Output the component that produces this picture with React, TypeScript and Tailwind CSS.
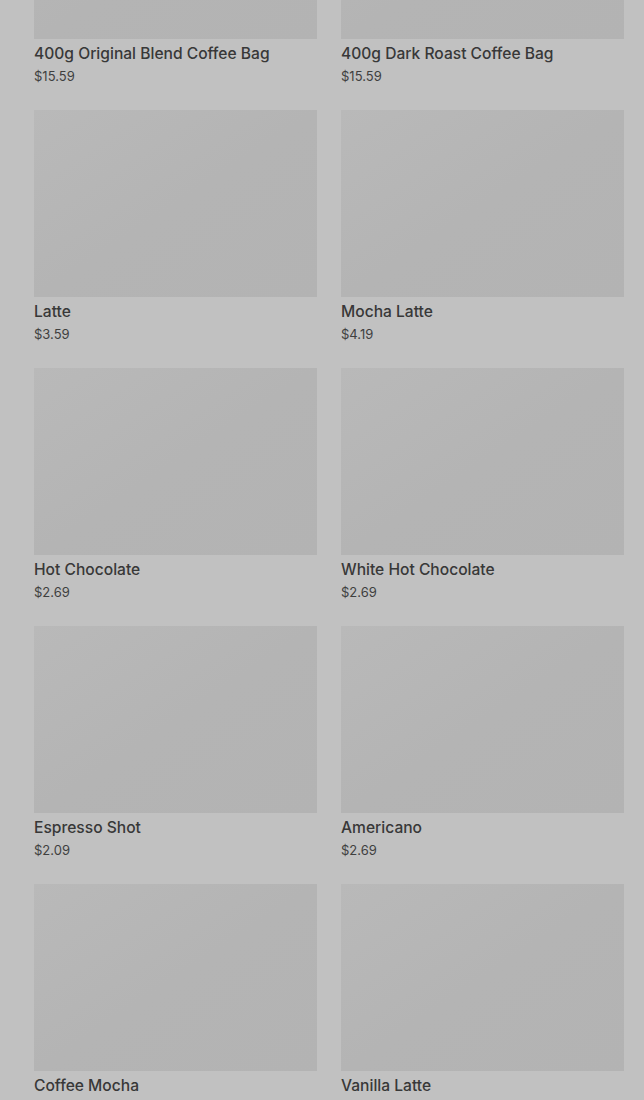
const products = [
  { name: "400g Original Blend Coffee Bag", price: "$15.59" },
  { name: "400g Dark Roast Coffee Bag", price: "$15.59" },
  { name: "Latte", price: "$3.59" },
  { name: "Mocha Latte", price: "$4.19" },
  { name: "Hot Chocolate", price: "$2.69" },
  { name: "White Hot Chocolate", price: "$2.69" },
  { name: "Espresso Shot", price: "$2.09" },
  { name: "Americano", price: "$2.69" },
  { name: "Coffee Mocha", price: "$2.69" },
  { name: "Vanilla Latte", price: "$3.79" },
];

const App = () => {
  return (
    <div className="h-[1100px] overflow-hidden bg-[#c1c1c1] font-['Inter','Noto_Sans',sans-serif]">
      <div className="grid grid-cols-2 gap-x-6 pl-[34px] pr-5 -mt-[148px]">
        {products.map((p) => (
          <div key={p.name} className="mb-6">
            <div className="h-[187px] bg-gradient-to-br from-[#b9b9b9] via-[#b4b4b4] to-[#b3b3b3]" />
            <h3 className="mt-[5px] text-[15.6px] leading-5 font-medium text-[#383838]">
              {p.name}
            </h3>
            <p className="mt-[2px] text-[13px] leading-5 text-[#3f3f3f]">{p.price}</p>
          </div>
        ))}
      </div>
    </div>
  );
};

export default App;
